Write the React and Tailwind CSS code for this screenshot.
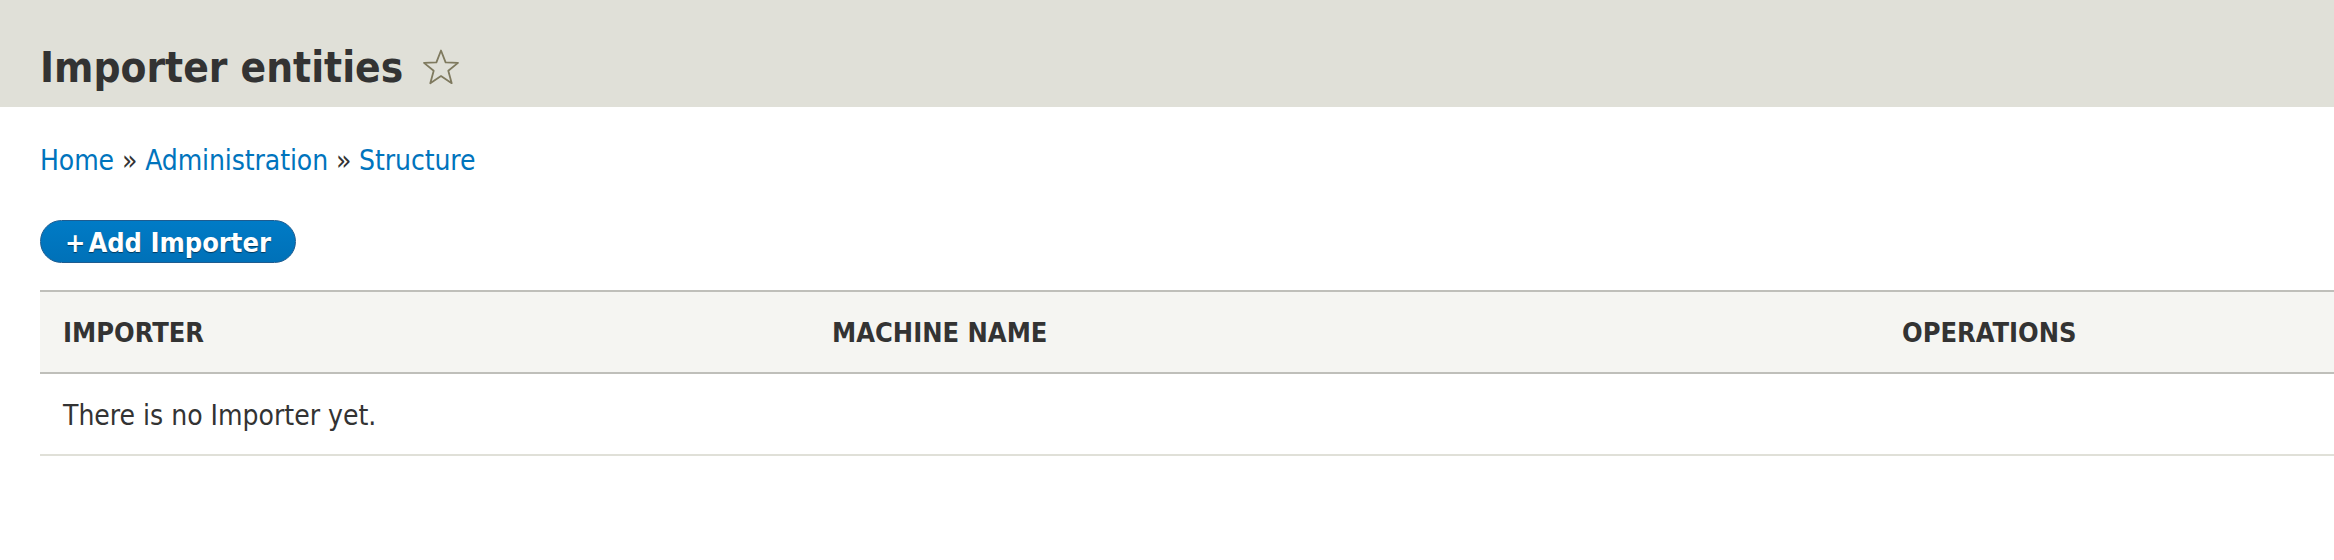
const font = { fontFamily: '"DejaVu Sans Condensed", "DejaVu Sans", "Liberation Sans", sans-serif' };

function Star() {
  return (
    <svg width="38" height="36" viewBox="0 0 38 36" className="ml-[19px] -mt-[2px]">
      <path
        d="M19 1.5 L23.6 13.4 L36 13.9 L26.3 21.7 L29.7 34.2 L19 27.1 L8.3 34.2 L11.7 21.7 L2 13.9 L14.4 13.4 Z"
        fill="none"
        stroke="#7f7a5f"
        strokeWidth="1.8"
        strokeLinejoin="round"
      />
    </svg>
  );
}

export default function App() {
  const columns = [
    { label: 'Importer', width: 'w-[769px]' },
    { label: 'Machine name', width: 'w-[1070px]' },
    { label: 'Operations', width: '' },
  ];

  return (
    <div className="w-[2334px] h-[560px] bg-white text-[#333333] overflow-hidden" style={font}>
      {/* page title bar */}
      <div className="h-[107px] bg-[#e0e0d8] pl-[40px] pt-[43px]">
        <div className="flex items-center">
          <h1 className="text-[42px] leading-[50px] font-bold text-[#333333]">Importer entities</h1>
          <Star />
        </div>
      </div>

      <div className="pl-[40px]">
        {/* breadcrumb */}
        <nav className="pt-[36px] text-[28px] leading-[36px] text-[#0074bd] tracking-[-0.1px]">
          <a href="#">Home</a>
          <span className="text-[#333333]"> » </span>
          <a href="#">Administration</a>
          <span className="text-[#333333]"> » </span>
          <a href="#">Structure</a>
        </nav>

        {/* action button */}
        <div className="pt-[41px]">
          <button className="h-[43px] w-[256px] pt-[3px] rounded-full bg-gradient-to-b from-[#007bc6] to-[#0071b8] border border-[#1e5c90] text-white text-[27px] leading-[36px] font-bold flex items-center justify-center [text-shadow:0_1px_1px_rgba(0,0,0,0.5)]">
            <span className="mr-[3px]">+</span>Add Importer
          </button>
        </div>

        {/* table */}
        <table className="mt-[27px] w-[2294px] border-collapse">
          <thead>
            <tr className="bg-[#f5f5f2] border-t-2 border-b-2 border-[#bfbfba] h-[82px]">
              {columns.map((c) => (
                <th
                  key={c.label}
                  className={`${c.width} text-left pl-[23px] pt-[3px] uppercase text-[27px] font-bold text-[#333333]`}
                >
                  {c.label}
                </th>
              ))}
            </tr>
          </thead>
          <tbody>
            <tr className="border-b-2 border-[#e0e0d8] h-[82px]">
              <td colSpan={3} className="pl-[23px] pt-[3px] text-[28px] text-[#333333]">
                There is no Importer yet.
              </td>
            </tr>
          </tbody>
        </table>
      </div>
    </div>
  );
}
